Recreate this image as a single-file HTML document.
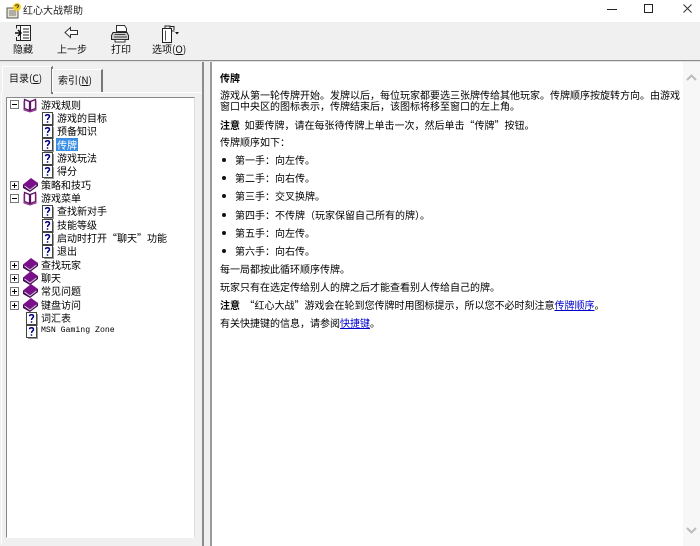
<!DOCTYPE html>
<html lang="zh-CN"><head><meta charset="utf-8"><style>
html,body{margin:0;padding:0;width:700px;height:546px;overflow:hidden;background:#fff}
body{position:relative;font-family:"Noto Sans CJK SC","WenQuanYi Zen Hei","Liberation Sans",sans-serif;color:#000}
div,svg.a{position:absolute}
.t{font-size:10px;line-height:13px;height:13px;white-space:nowrap;margin-top:-1px}
.c{left:220px}
.b{left:235px}
.dot{left:222px;width:4px;height:4px;border-radius:50%;background:#111}
.tb{font-size:10px;line-height:13px;white-space:nowrap;color:#111;margin-top:-1px}
a{color:#00c;text-decoration:underline}
u{text-decoration:underline}
b{font-weight:700}
#wrap{left:0;top:0;width:700px;height:546px;filter:blur(.3px)}
</style></head><body>
<svg width="0" height="0" style="position:absolute"><defs>
<g id="q"><rect x=".5" y=".5" width="10" height="12" fill="#fff" stroke="#444"/><path d="M11.500 2v11.500H2" fill="none" stroke="#999"/><path d="M3.500 4.200C3.700 2.400 7.500 2.200 7.500 4.400 7.500 6 5.500 6 5.500 8M5.500 9.200v1.600" fill="none" stroke="#000080" stroke-width="1.500"/></g>
<g id="open"><path d="M1.500 1.500L6.500 3.500V12.500L1.500 10.500Z" fill="#fff" stroke="#5b1060" stroke-width="1.300"/><path d="M12.500 1.500L7.500 3.500V12.500L12.500 10.500Z" fill="#fff" stroke="#5b1060" stroke-width="1.300"/><path d="M1 3v9l6 2 6-2V3" fill="none" stroke="#8a2a90" stroke-width="1"/></g>
<g id="book"><path d="M0 6.500L8 0 15 5 7 11Z" fill="#7a0f8a"/><path d="M0 6.500V10L7 14 15 8V5L7 11Z" fill="#3f0a50"/><path d="M1.500 8L7 12 13.500 7" fill="none" stroke="#e8d0ea" stroke-width=".9"/></g>
<g id="plus"><rect x=".5" y=".5" width="8" height="8" fill="#fff" stroke="#777"/><path d="M2 4.500h5M4.500 2v5" stroke="#000"/></g>
<g id="minus"><rect x=".5" y=".5" width="8" height="8" fill="#fff" stroke="#777"/><path d="M2 4.500h5" stroke="#000"/></g>
</defs></svg>
<div id="wrap">
<!-- title bar -->
<svg class="a" style="left:5px;top:2px" width="18" height="18"><rect x="2" y="6" width="11" height="10" fill="#e8e4d0" stroke="#555"/><path d="M4 9h7M4 11h7M4 13h7" stroke="#777"/><circle cx="12" cy="5" r="4" fill="#f5d020"/><path d="M10.500 4c.3-1.500 3-1.500 3 0 0 1-1.500 1-1.500 2.300" fill="none" stroke="#303030" stroke-width="1"/></svg>
<div class="t" style="left:23px;top:4px;color:#222">红心大战帮助</div>
<svg class="a" style="left:600px;top:0" width="100" height="20"><path d="M7 9.500h10" stroke="#222"/><rect x="44.500" y="4.500" width="8" height="8" fill="none" stroke="#222"/><path d="M83.500 4.500l8 8M91.500 4.500l-8 8" stroke="#333" stroke-width="1"/></svg>

<!-- toolbar -->
<div style="left:0;top:22px;width:700px;height:38px;background:#f0f0f0"></div>
<div style="left:0;top:60px;width:700px;height:1px;background:#8c8c8c"></div>
<div style="left:0;top:61px;width:700px;height:1px;background:#e0e0e0"></div>
<svg class="a" style="left:13px;top:24px" width="20" height="20"><rect x="7.500" y="1.500" width="10" height="15" fill="#fff" stroke="#222"/><path d="M10 5h6M10 8h6M10 11h6M10 14h6" stroke="#222"/><path d="M7.500 1.500H3.500v3M3.500 13v3.500h4" fill="none" stroke="#222"/><path d="M2 9h5M5 6l3 3-3 3" fill="none" stroke="#111" stroke-width="1.500"/></svg>
<svg class="a" style="left:63px;top:25px" width="18" height="16"><path d="M2 7.500L7.500 2.500V5.500H14.500V9.500H7.500V12.500Z" fill="#fff" stroke="#333"/></svg>
<svg class="a" style="left:110px;top:24px" width="20" height="20"><path d="M6.500 1.500h8l2 3v3h-10z" fill="#fff" stroke="#333"/><path d="M3 8.500h14l1.500 3v4h-17v-4z" fill="#ccc" stroke="#222"/><path d="M4 13h13M4.500 10.500h11" stroke="#444"/><path d="M5 15.500h10v2.500H5z" fill="#fff" stroke="#333"/></svg>
<svg class="a" style="left:160px;top:24px" width="20" height="20"><path d="M2.500 4.500h9v14h-9z" fill="#fff" stroke="#222"/><path d="M5 4.500V2h5v2.500M10 2.500h4v3.500M11.500 7h3" fill="none" stroke="#222"/><path d="M5.500 6.500v10" stroke="#555"/><path d="M15 8h4l-2 2.500z" fill="#111"/></svg>
<div class="tb" style="left:13px;top:43px">隐藏</div>
<div class="tb" style="left:57px;top:43px">上一步</div>
<div class="tb" style="left:111px;top:43px">打印</div>
<div class="tb" style="left:152px;top:43px">选项(<u>O</u>)</div>

<!-- left panel -->
<div style="left:0;top:62px;width:203px;height:484px;background:#f0f0f0"></div>
<div style="left:1px;top:92px;width:200px;height:451px;background:#f0f0f0;border-top:1px solid #fff;border-left:1px solid #fff;border-right:1px solid #888;"></div>
<!-- tabs -->
<div style="left:2px;top:66px;width:48px;height:27px;background:#f0f0f0;border:1px solid #fff;border-bottom:0;border-right:2px solid #777"></div>
<div style="left:52px;top:69px;width:48px;height:22px;background:#f0f0f0;border:1px solid #fff;border-bottom:0;border-right:2px solid #777"></div>
<div style="left:2px;top:92px;width:47px;height:2px;background:#f0f0f0"></div>
<div class="tb" style="left:9px;top:72px">目录(<u>C</u>)</div>
<div class="tb" style="left:58px;top:74px">索引(<u>N</u>)</div>
<!-- tree box -->
<div style="left:6px;top:97px;width:187px;height:439px;background:#fff;border:1px solid #888;border-right-color:#ddd;border-bottom-color:#fff"></div>

<svg class="a" style="left:10px;top:100px" width="9" height="9"><use href="#minus"/></svg>
<svg class="a" style="left:23px;top:98px" width="16" height="15"><use href="#open"/></svg>
<div class="t" style="left:41px;top:99px">游戏规则</div>
<svg class="a" style="left:42px;top:112px" width="12" height="14"><use href="#q"/></svg>
<div class="t" style="left:57px;top:112px">游戏的目标</div>
<svg class="a" style="left:42px;top:125px" width="12" height="14"><use href="#q"/></svg>
<div class="t" style="left:57px;top:125px">预备知识</div>
<svg class="a" style="left:42px;top:138px" width="12" height="14"><use href="#q"/></svg>
<div style="left:56px;top:138px;width:22px;height:13px;background:#3a8ee6"></div>
<div class="t" style="left:57px;top:139px;color:#fff">传牌</div>
<svg class="a" style="left:42px;top:152px" width="12" height="14"><use href="#q"/></svg>
<div class="t" style="left:57px;top:152px">游戏玩法</div>
<svg class="a" style="left:42px;top:165px" width="12" height="14"><use href="#q"/></svg>
<div class="t" style="left:57px;top:165px">得分</div>
<svg class="a" style="left:10px;top:181px" width="9" height="9"><use href="#plus"/></svg>
<svg class="a" style="left:23px;top:178px" width="16" height="15"><use href="#book"/></svg>
<div class="t" style="left:41px;top:179px">策略和技巧</div>
<svg class="a" style="left:10px;top:194px" width="9" height="9"><use href="#minus"/></svg>
<svg class="a" style="left:23px;top:191px" width="16" height="15"><use href="#open"/></svg>
<div class="t" style="left:41px;top:192px">游戏菜单</div>
<svg class="a" style="left:42px;top:205px" width="12" height="14"><use href="#q"/></svg>
<div class="t" style="left:57px;top:205px">查找新对手</div>
<svg class="a" style="left:42px;top:219px" width="12" height="14"><use href="#q"/></svg>
<div class="t" style="left:57px;top:219px">技能等级</div>
<svg class="a" style="left:42px;top:232px" width="12" height="14"><use href="#q"/></svg>
<div class="t" style="left:57px;top:232px">启动时打开&#x201C;聊天&#x201D;功能</div>
<svg class="a" style="left:42px;top:245px" width="12" height="14"><use href="#q"/></svg>
<div class="t" style="left:57px;top:245px">退出</div>
<svg class="a" style="left:10px;top:261px" width="9" height="9"><use href="#plus"/></svg>
<svg class="a" style="left:23px;top:258px" width="16" height="15"><use href="#book"/></svg>
<div class="t" style="left:41px;top:259px">查找玩家</div>
<svg class="a" style="left:10px;top:274px" width="9" height="9"><use href="#plus"/></svg>
<svg class="a" style="left:23px;top:271px" width="16" height="15"><use href="#book"/></svg>
<div class="t" style="left:41px;top:272px">聊天</div>
<svg class="a" style="left:10px;top:287px" width="9" height="9"><use href="#plus"/></svg>
<svg class="a" style="left:23px;top:284px" width="16" height="15"><use href="#book"/></svg>
<div class="t" style="left:41px;top:285px">常见问题</div>
<svg class="a" style="left:10px;top:301px" width="9" height="9"><use href="#plus"/></svg>
<svg class="a" style="left:23px;top:298px" width="16" height="15"><use href="#book"/></svg>
<div class="t" style="left:41px;top:299px">键盘访问</div>
<svg class="a" style="left:26px;top:312px" width="12" height="14"><use href="#q"/></svg>
<div class="t" style="left:41px;top:312px">词汇表</div>
<svg class="a" style="left:26px;top:325px" width="12" height="14"><use href="#q"/></svg>
<div class="t" style="left:41px;top:325px;font-family:'Liberation Mono',monospace;font-size:8.200px">MSN Gaming Zone</div>

<!-- splitter -->
<div style="left:202px;top:62px;width:2px;height:484px;background:#8c8c8c"></div>
<div style="left:204px;top:62px;width:6px;height:484px;background:#f0f0f0"></div>
<div style="left:210px;top:62px;width:2px;height:484px;background:#9a9a9a"></div>

<!-- scrollbar -->
<div style="left:683px;top:62px;width:17px;height:484px;background:#f7f7f7"></div>
<svg class="a" style="left:683px;top:70px" width="17" height="14"><path d="M4 10l4.500-4.500L13 10" fill="none" stroke="#bbb" stroke-width="2"/></svg>
<svg class="a" style="left:683px;top:524px" width="17" height="14"><path d="M4 4l4.500 4.500L13 4" fill="none" stroke="#bbb" stroke-width="2"/></svg>

<!-- content -->
<div class="t c" style="top:72px"><b>传牌</b></div>
<div class="t c" style="top:89px">游戏从第一轮传牌开始。发牌以后&#xFF0C;每位玩家都要选三张牌传给其他玩家。传牌顺序按旋转方向。由游戏</div>
<div class="t c" style="top:100px">窗口中央区的图标表示&#xFF0C;传牌结束后&#xFF0C;该图标将移至窗口的左上角。</div>
<div class="t c" style="top:119px"><b>注意</b>&nbsp; 如要传牌&#xFF0C;请在每张待传牌上单击一次&#xFF0C;然后单击&#x201C;传牌&#x201D;按钮。</div>
<div class="t c" style="top:136px">传牌顺序如下&#xFF1A;</div>
<div class="dot" style="top:158px"></div><div class="t b" style="top:154px">第一手&#xFF1A;向左传。</div>
<div class="dot" style="top:176px"></div><div class="t b" style="top:172px">第二手&#xFF1A;向右传。</div>
<div class="dot" style="top:194px"></div><div class="t b" style="top:190px">第三手&#xFF1A;交叉换牌。</div>
<div class="dot" style="top:213px"></div><div class="t b" style="top:209px">第四手&#xFF1A;不传牌&#xFF08;玩家保留自己所有的牌&#xFF09;。</div>
<div class="dot" style="top:231px"></div><div class="t b" style="top:227px">第五手&#xFF1A;向左传。</div>
<div class="dot" style="top:249px"></div><div class="t b" style="top:245px">第六手&#xFF1A;向右传。</div>
<div class="t c" style="top:263px">每一局都按此循环顺序传牌。</div>
<div class="t c" style="top:281px">玩家只有在选定传给别人的牌之后才能查看别人传给自己的牌。</div>
<div class="t c" style="top:299px"><b>注意</b>&nbsp; &#x201C;红心大战&#x201D;游戏会在轮到您传牌时用图标提示&#xFF0C;所以您不必时刻注意<a>传牌顺序</a>。</div>
<div class="t c" style="top:317px">有关快捷键的信息&#xFF0C;请参阅<a>快捷键</a>。</div>
</div>
</body></html>
